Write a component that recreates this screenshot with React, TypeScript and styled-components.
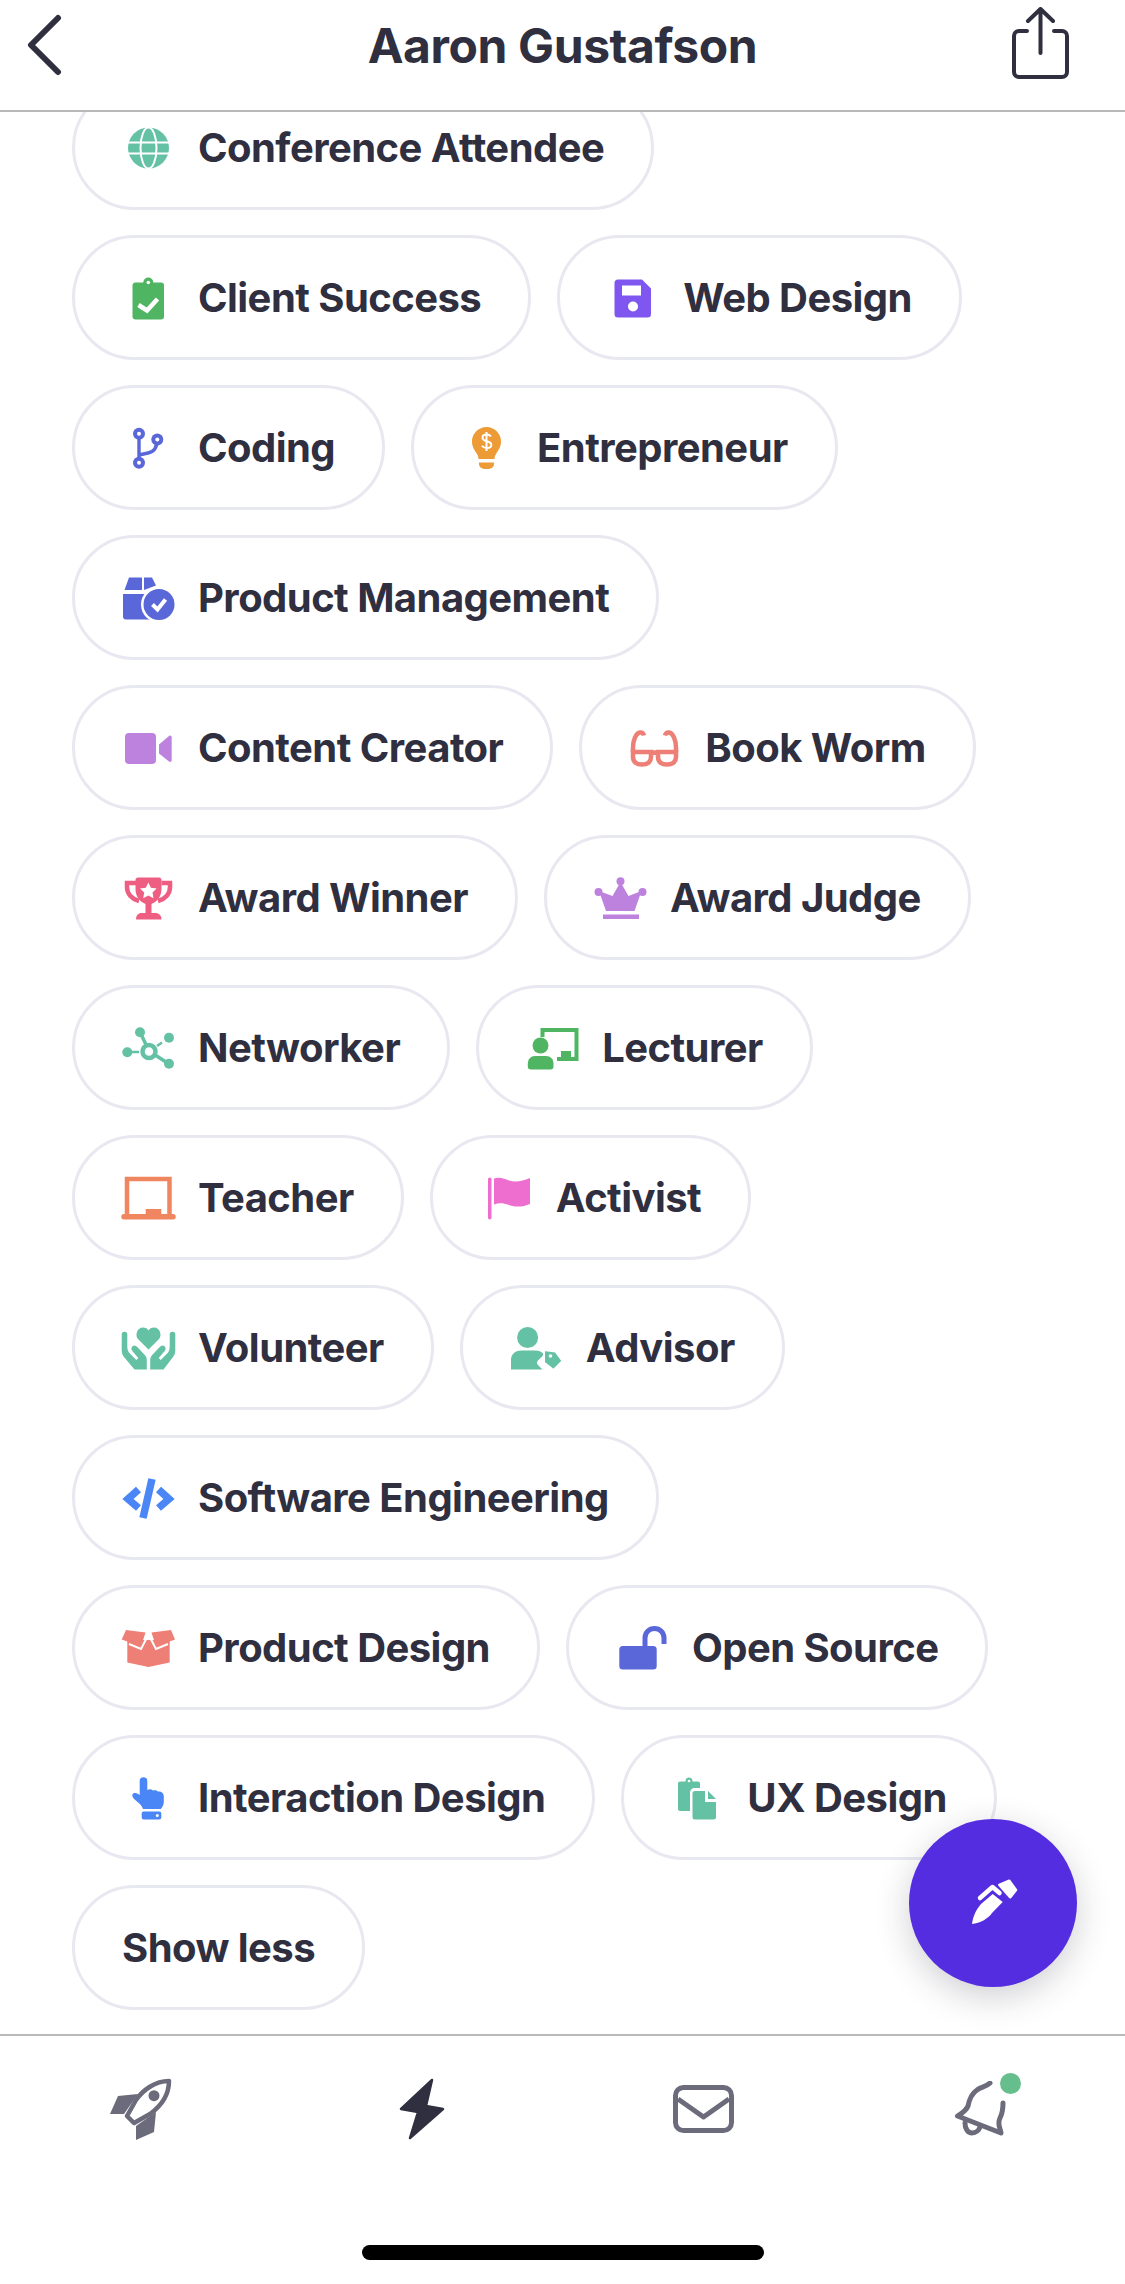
import React from 'react';
import styled, { createGlobalStyle } from 'styled-components';

const INK = '#2f2f3f';
const MINT = '#64c1a4';
const GREEN = '#4fb562';
const INDIGO = '#5a67d8';
const BLUE = '#4a86f5';
const LILAC = '#bd82dd';
const CORAL = '#ee7f76';

const Globe = () => (
  <>
    <circle cx="25.5" cy="25" r="20.5" fill={MINT} />
    <g fill="none" stroke="#fff" strokeWidth="2">
      <ellipse cx="25.5" cy="25" rx="8" ry="20.5" />
      <path d="M5 19.5h41M5 30.5h41" />
    </g>
  </>
);

const Clipboard = () => (
  <>
    <rect x="9.5" y="9.5" width="31.5" height="37" rx="3" fill={GREEN} />
    <circle cx="25.3" cy="9.5" r="5" fill={GREEN} />
    <circle cx="25.3" cy="9.5" r="1.8" fill="#fff" />
    <path d="M15.5 32l8.5 5.5L34.5 26" fill="none" stroke="#fff" strokeWidth="4.5" />
  </>
);

const Floppy = () => (
  <>
    <path d="M10 6.5h24l9 9V41a3.5 3.5 0 0 1-3.5 3.5H10A3.5 3.5 0 0 1 6.5 41V10A3.5 3.5 0 0 1 10 6.5z" fill="#7f56f0" />
    <rect x="14" y="12.5" width="19" height="10" fill="#fff" />
    <circle cx="25" cy="33.5" r="5" fill="#fff" />
  </>
);

const Branch = () => (
  <>
    <path d="M16 11v29M34 17c0 8-3 12-9 13l-9 2" fill="none" stroke={INDIGO} strokeWidth="3.4" />
    <g fill={INDIGO}>
      <circle cx="16" cy="10.8" r="6" />
      <circle cx="34.3" cy="16.5" r="6" />
      <circle cx="16" cy="39.8" r="6" />
    </g>
    <g fill="#fff">
      <circle cx="16" cy="10.8" r="2" />
      <circle cx="34.3" cy="16.5" r="2" />
      <circle cx="16" cy="39.8" r="2" />
    </g>
  </>
);

const Bulb = () => (
  <>
    <path d="M24.5 4C32.5 4 39 10.5 39 18.5c0 6-3 9-5 12.5-1 2-1.5 3-1.5 5h-16c0-2-.5-3-1.500-5-2-3.500-5-6.500-5-12.500C10 10.500 16.500 4 24.500 4z" fill="#ed9b37" />
    <path d="M17 39.500h15v1.500c0 3-2.500 5-7.500 5s-7.500-2-7.500-5z" fill="#ed9b37" />
    <path d="M29 13.500c-1-1.500-2.500-2-4.500-2-2.500 0-4 1.300-4 3.200 0 4.500 8.800 2.500 8.800 7 0 2-1.800 3.300-4.500 3.300-2.200 0-3.800-.8-4.800-2.300M24.500 9v19" fill="none" stroke="#fff" strokeWidth="2" />
  </>
);

const BoxCheck = () => (
  <>
    <path d="M6 4.500h13V17H1.500zM21 4.500h8l4 8-12 4.500zM0 21h31a19 19 0 0 0-4 25.500H3a3 3 0 0 1-3-3z" fill={INDIGO} />
    <circle cx="36" cy="31.500" r="18" fill="#fff" />
    <circle cx="36" cy="31.500" r="15.500" fill={INDIGO} />
    <path d="M29.500 31.500l5 5 8-10" fill="none" stroke="#fff" strokeWidth="4" />
  </>
);

const Video = () => (
  <>
    <rect x="2" y="10" width="31" height="31" rx="4" fill={LILAC} />
    <path d="M36 21.500l10-8.500c1.500-1 2.700 0 2.700 1.500v22.500c0 1.500-1.200 2.500-2.700 1.500l-10-8z" fill={LILAC} />
  </>
);

const Glasses = () => (
  <g fill="none" stroke={CORAL} strokeWidth="4.500">
    <path d="M3 29V25C3 17 6 10 10 9.500c2-.2 3.500 1 4 3M46 29V25c0-8-3-15-7-15.500-2-.2-3.500 1-4 3" />
    <path d="M3 29h18v5c0 5-3.500 7.500-9 7.500S3 39 3 34zM28 29h18v5c0 5-3.500 7.500-9 7.500S28 39 28 34zM21 30.500c2-1 5-1 7 0" />
  </g>
);

const Trophy = () => (
  <>
    <path d="M13 10H4v4c0 7 5 12 12 14M38.500 10H47v4c0 7-5 12-12 14" fill="none" stroke="#ee5e82" strokeWidth="4.500" />
    <path d="M15 4.500h21c1.500 0 2.500 1 2.500 2.500v9c0 8-5 13-10 15v9h-6v-9c-5-2-10-7-10-15V7c0-1.500 1-2.500 2.500-2.500z" fill="#ee5e82" />
    <path d="M13 46.500c0-4 2-6.500 6-6.500h13c4 0 6.500 2.500 6.500 6.500z" fill="#ee5e82" />
    <path d="M25.300 9.500l2.600 5.200 5.700.8-4.100 4 1 5.700-5.200-2.700-5.100 2.700 1-5.700-4.200-4 5.800-.8z" fill="#fff" />
  </>
);

const Crown = () => (
  <g fill={LILAC}>
    <circle cx="25.500" cy="8.200" r="4" />
    <circle cx="3.500" cy="19" r="4" />
    <circle cx="47.500" cy="19" r="4" />
    <path d="M25.500 9l8 14 13-5-7 20H11L4 18l13.500 5z" />
    <rect x="8" y="41.500" width="36" height="4.500" />
  </g>
);

const Network = () => (
  <>
    <path d="M17 9l9 19 20 13" fill="none" stroke={MINT} strokeWidth="3.500" />
    <path d="M8 29h8M34 23l5-3.500" fill="none" stroke={MINT} strokeWidth="2.500" />
    <g fill={MINT}>
      <circle cx="17" cy="9.200" r="5" />
      <circle cx="46" cy="14.800" r="5" />
      <circle cx="46" cy="40.800" r="5" />
      <circle cx="4.300" cy="29.200" r="5" />
    </g>
    <circle cx="26" cy="28.500" r="6.500" fill="#fff" stroke={MINT} strokeWidth="4.500" />
  </>
);

const Lecturer = () => (
  <g fill={GREEN}>
    <path d="M15.500 14V7h34v29H30" fill="none" stroke={GREEN} strokeWidth="4" />
    <rect x="34" y="28" width="10" height="8" />
    <circle cx="13.500" cy="22.500" r="8" />
    <path d="M8 33h11c4.500 0 7.500 3 7.500 8v2.500c0 2-1 3-3 3H3.800c-2 0-3-1-3-3V41c0-5 3-8 7.200-8z" />
  </g>
);

const Laptop = () => (
  <>
    <path d="M4 41V6h42.500v35" fill="none" stroke="#f0865f" strokeWidth="4.500" />
    <path d="M22.700 36h15.600v5H50a2.500 2.500 0 0 1 0 5.500H1A2.500 2.500 0 0 1 1 41h21.700z" fill="#f0865f" />
  </>
);

const Flag = () => (
  <g fill="#ed6ecf">
    <rect x="7" y="4.500" width="3.500" height="42" rx="1.700" />
    <path d="M13 5.500c6-2 10 0 15 2 6 2 13 1 21-2.500v26c-7 3-14 3.500-21 1-5-2-10-2.500-15-.5z" />
  </g>
);

const Hands = () => (
  <g fill={MINT}>
    <path d="M25.500 26.500L15 16c-3-3-1.500-11.500 5-11.500 2.500 0 4.500 1.200 5.500 3 1-1.800 3-3 5.500-3 6.500 0 8 8.500 5 11.500z" />
    <path d="M-1.300 11.500a2.800 2.800 0 0 1 5.600 0V24c0 3 1 5 3 7l6 6 2-2-6-7c-1.500-2-1-4 .5-5 1.500-1 3-.5 4.500 1l7.500 8c1.500 2 2 3 2 5v9.500H11.500L1 34c-1.500-2-2.300-4-2.300-7z" />
    <path d="M52.300 11.500a2.800 2.800 0 0 0-5.600 0V24c0 3-1 5-3 7l-6 6-2-2 6-7c1.500-2 1-4-.5-5-1.500-1-3-.5-4.500 1l-7.500 8c-1.500 2-2 3-2 5v9.500h13.300L50 34c1.500-2 2.300-4 2.300-7z" />
  </g>
);

const AdvisorTag = () => (
  <g fill={MINT}>
    <circle cx="16.600" cy="14.500" r="10.500" />
    <path d="M10 27.500h14c4 0 7 1.500 9 4l-6 6c-1.500 1.500-1.500 3 0 4.500l4.500 4.500H0V37c0-5.500 4-9.500 10-9.500z" />
    <path d="M33 27l11.500 1.500 7 9.500-9 9-9.500-7.500z" stroke="#fff" strokeWidth="2" />
    <circle cx="39.500" cy="33" r="1.800" fill="#fff" />
  </g>
);

const CodeTag = () => (
  <g fill="none" stroke={BLUE} strokeWidth="7.500">
    <path d="M15.500 16.500L5 26l10.500 9M35.500 16.500L46 26l-10.500 9" />
    <path d="M29 6l-9 39" />
  </g>
);

const OpenBox = () => (
  <>
    <path d="M4.300 17h42.400v22.500L25.500 44 4.300 39.500z" fill={CORAL} />
    <path d="M6 21l12 5 7.500-14.500L33 26l12-5" fill="none" stroke="#fff" strokeWidth="2" />
    <path d="M3 7l19.500 2.500L18 23.500-1.300 16.500zM48 7l-19.500 2.500L33 23.500l19-7z" fill={CORAL} />
  </>
);

const Pointer = () => (
  <>
    <path d="M16.700 8a3.800 3.800 0 0 1 7.600 0v9c2-1 4-.8 5.500.5 2-.7 4-.3 5 1 3-.5 6 1 6 5V29c0 3-1.500 5-3 7H20c-1-3-3-5-6-7.500-3-2.500-5.500-5-4.500-7 1-2 3.500-2 7.200.5z" fill={BLUE} />
    <rect x="18.700" y="38.500" width="19.600" height="8" rx="2" fill={BLUE} />
    <circle cx="34.300" cy="42.500" r="1.500" fill="#fff" />
  </>
);

const Padlock = () => (
  <>
    <path d="M28 23v-8c0-5.500 4-9.500 9.500-9.500S47 9.500 47 15v6" fill="none" stroke={INDIGO} strokeWidth="5" />
    <rect x="2.300" y="23" width="37.400" height="23.500" rx="3.500" fill={INDIGO} />
  </>
);

const Sheets = () => (
  <>
    <path d="M8 8.500h18a2 2 0 0 1 2 2V15h-5c-3 0-5 2-5 5v18H8a2 2 0 0 1-2-2V10.500a2 2 0 0 1 2-2z" fill={MINT} />
    <circle cx="17" cy="8" r="3.500" fill={MINT} />
    <circle cx="17" cy="8" r="1.300" fill="#fff" />
    <path d="M23 18h10v11h11v15a2.500 2.500 0 0 1-2.500 2.500H23a2.500 2.500 0 0 1-2.500-2.500V20.500A2.500 2.500 0 0 1 23 18zM36 18l8 8h-8z" fill={MINT} />
  </>
);

const chips: { label: string; icon?: React.ComponentType }[] = [
  { label: 'Conference Attendee', icon: Globe },
  { label: 'Client Success', icon: Clipboard },
  { label: 'Web Design', icon: Floppy },
  { label: 'Coding', icon: Branch },
  { label: 'Entrepreneur', icon: Bulb },
  { label: 'Product Management', icon: BoxCheck },
  { label: 'Content Creator', icon: Video },
  { label: 'Book Worm', icon: Glasses },
  { label: 'Award Winner', icon: Trophy },
  { label: 'Award Judge', icon: Crown },
  { label: 'Networker', icon: Network },
  { label: 'Lecturer', icon: Lecturer },
  { label: 'Teacher', icon: Laptop },
  { label: 'Activist', icon: Flag },
  { label: 'Volunteer', icon: Hands },
  { label: 'Advisor', icon: AdvisorTag },
  { label: 'Software Engineering', icon: CodeTag },
  { label: 'Product Design', icon: OpenBox },
  { label: 'Open Source', icon: Padlock },
  { label: 'Interaction Design', icon: Pointer },
  { label: 'UX Design', icon: Sheets },
  { label: 'Show less' },
];

const App = () => (
  <Page>
    <GlobalStyle />
    <Header>
      <BackIcon viewBox="0 0 36 64">
        <path d="M32 5L5 32l27 27" />
      </BackIcon>
      <Title>Aaron Gustafson</Title>
      <ShareIcon viewBox="0 0 57 72">
        <path d="M15 24H7a5 5 0 0 0-5 5v36a5 5 0 0 0 5 5h43a5 5 0 0 0 5-5V29a5 5 0 0 0-5-5h-8M28.500 46V2M16 14L28.500 2 41 14" />
      </ShareIcon>
    </Header>

    <Main>
      <ChipList>
        {chips.map(({ label, icon: Icon }) => (
          <Chip key={label}>
            {Icon && (
              <ChipIcon viewBox="0 0 50 50">
                <Icon />
              </ChipIcon>
            )}
            {label}
          </Chip>
        ))}
      </ChipList>
      <Fab>
        <svg width="50" height="50" viewBox="0 0 50 50" fill="#fff">
          <path d="M4 46c1-8 4-14 9-20l11.700-10 10 8L24 35c-4 6-12 10-20 11z" />
          <path d="M12 20L24.500 9l7 6" fill="none" stroke="#fff" strokeWidth="4.500" strokeLinecap="round" strokeLinejoin="round" />
          <path d="M31.300 7l10-4.300L48 12l-5.700 7.300z" stroke="#fff" strokeWidth="2.500" strokeLinejoin="round" />
        </svg>
      </Fab>
    </Main>

    <BottomNav>
      <NavItem>
        <svg width="62" height="62" viewBox="0 0 62 62">
          <path d="M28 16L8 18 0 36h14zM46 34l-2 20-18 8V48z" fill="#6b6b7b" />
          <path d="M59 3C45 3 33 12 26 22L17 38l7 7 16-9C51 28 59 17 59 3z" fill="#fff" stroke="#6b6b7b" strokeWidth="4.500" strokeLinejoin="round" />
          <circle cx="44" cy="17.700" r="5.500" fill="#6b6b7b" />
        </svg>
      </NavItem>
      <NavItem>
        <svg width="46" height="62" viewBox="0 0 46 62">
          <path d="M33 2L2 31l17 3-8 26 33-29-17-3z" fill={INK} stroke={INK} strokeWidth="2.500" strokeLinejoin="round" />
        </svg>
      </NavItem>
      <NavItem>
        <svg width="61" height="48" viewBox="0 0 61 48" fill="none" stroke="#6b6b7b" strokeWidth="5">
          <rect x="2.500" y="2.500" width="56" height="43" rx="8" />
          <path d="M5 14l25.500 18L56 14" strokeLinejoin="round" />
        </svg>
      </NavItem>
      <NavItem>
        <BellWrap>
          <svg width="53" height="56" viewBox="0 0 53 56" fill="none" stroke="#6b6b7b" strokeWidth="5" strokeLinecap="round" strokeLinejoin="round">
            <path d="M36 2c-4 4-9 4-13 7-6 4-8 11-9 16-2 5-6 7-10.500 10L47 52c-1-6-4-9-1-15 2-4 3-9 3-15" />
            <path d="M11 42c0 6 3 10 7 10s7-3 8-6" />
          </svg>
          <NotificationDot />
        </BellWrap>
      </NavItem>
      <HomeBar />
    </BottomNav>
  </Page>
);

const GlobalStyle = createGlobalStyle`
  html, body {
    margin: 0;
    background: #fff;
  }

  body {
    font-family: Inter, "Liberation Sans", sans-serif;
    color: ${INK};
  }
`;

const Page = styled.div`
  width: 1125px;
  height: 2284px;
  display: flex;
  flex-direction: column;
  background: #fff;
  overflow: hidden;
`;

const Header = styled.header`
  flex: none;
  height: 112px;
  box-sizing: border-box;
  padding: 0 56px 20px 56px;
  display: grid;
  grid-template-columns: 1fr auto 1fr;
  align-items: center;
  background: #fff;
  border-bottom: 2px solid #b9b9bc;
  position: relative;
  z-index: 2;
`;

const BackIcon = styled.svg`
  width: 36px;
  height: 64px;
  margin-left: -30px;
  fill: none;
  stroke: ${INK};
  stroke-width: 6;
  stroke-linecap: round;
  stroke-linejoin: round;
`;

const Title = styled.h1`
  margin: 0;
  font-size: 48px;
  font-weight: 650;
  letter-spacing: -0.4px;
`;

const ShareIcon = styled.svg`
  width: 57px;
  height: 72px;
  justify-self: end;
  margin-top: -4px;
  fill: none;
  stroke: ${INK};
  stroke-width: 4;
  stroke-linecap: round;
  stroke-linejoin: round;
`;

const Main = styled.main`
  flex: 1;
  min-height: 0;
  position: relative;
  overflow: hidden;
`;

const ChipList = styled.div`
  width: 1040px;
  margin: -27px 0 0 72px;
  display: flex;
  flex-wrap: wrap;
  gap: 25px 26px;
`;

const Chip = styled.div`
  height: 125px;
  box-sizing: border-box;
  padding: 0 47px;
  display: inline-flex;
  align-items: center;
  background: #fff;
  border: 3px solid #e8e8f1;
  border-radius: 63px;
  font-size: 40px;
  font-weight: 650;
  letter-spacing: -0.55px;
  white-space: nowrap;
`;

const ChipIcon = styled.svg`
  flex: none;
  width: 50px;
  height: 50px;
  margin: 0 25px 0 1px;
  overflow: visible;
`;

const Fab = styled.div`
  position: absolute;
  right: 48px;
  bottom: 47px;
  width: 168px;
  height: 168px;
  border-radius: 50%;
  display: flex;
  align-items: center;
  justify-content: center;
  background: #542de0;
  box-shadow: 0 10px 34px rgba(40, 40, 60, 0.22);
`;

const BottomNav = styled.nav`
  flex: none;
  height: 250px;
  box-sizing: border-box;
  padding-top: 42px;
  display: grid;
  grid-template-columns: repeat(4, 1fr);
  align-items: start;
  justify-items: center;
  background: #fff;
  border-top: 2px solid #b9b9bc;
  position: relative;
  z-index: 2;
`;

const NavItem = styled.div`
  height: 62px;
  display: flex;
  align-items: center;
  justify-content: center;
`;

const BellWrap = styled.div`
  position: relative;
  display: flex;
  margin-right: 8px;
`;

const NotificationDot = styled.span`
  position: absolute;
  top: -8px;
  right: -14px;
  width: 21px;
  height: 21px;
  border-radius: 50%;
  background: #66be8c;
`;

const HomeBar = styled.div`
  position: absolute;
  left: 362px;
  bottom: 24px;
  width: 402px;
  height: 15px;
  border-radius: 8px;
  background: #000;
`;

export default App;
